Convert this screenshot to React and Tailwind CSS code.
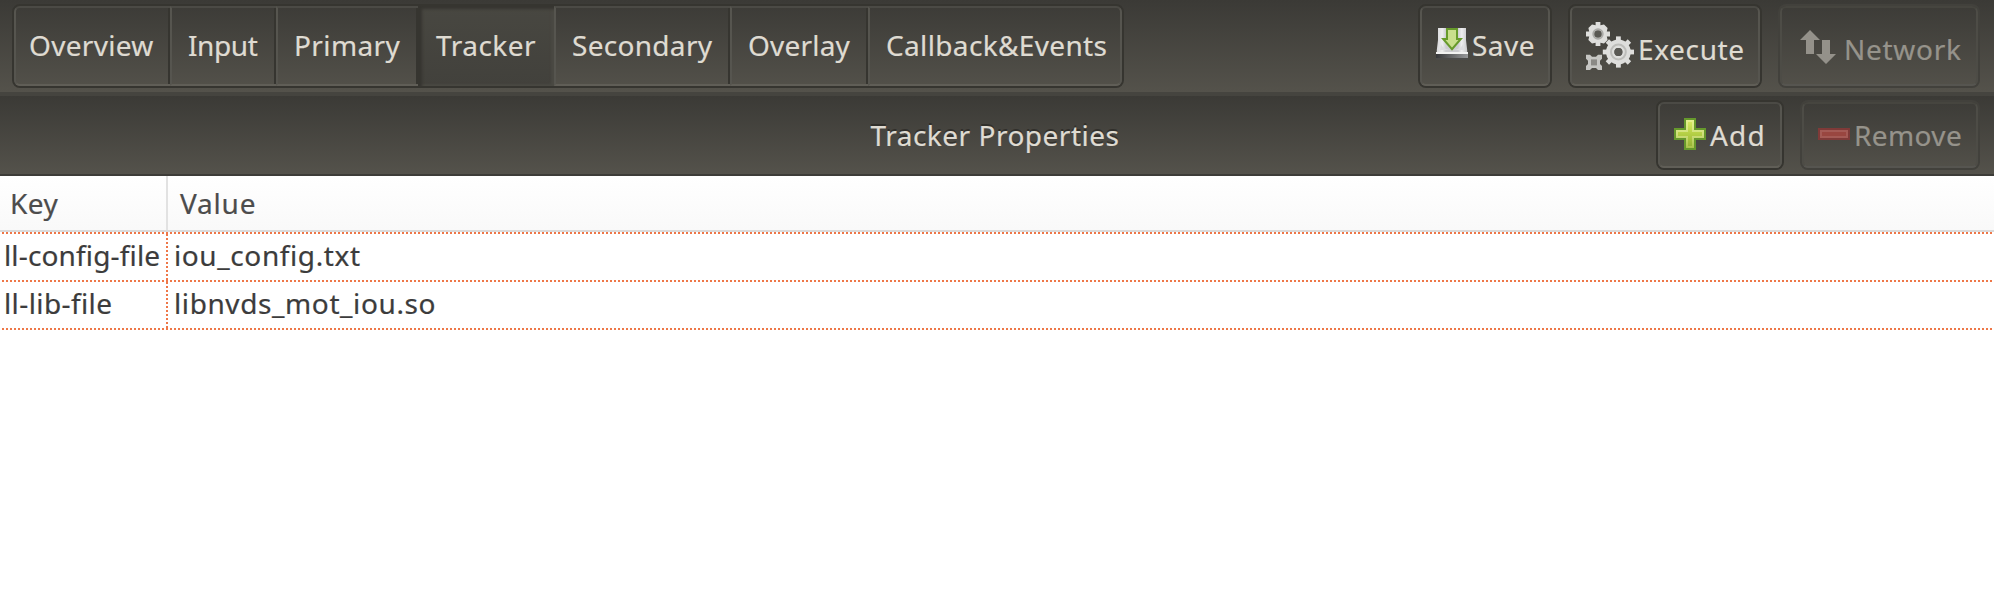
import React from "react";
import clsx from "clsx";

const TABS = [
  { label: "Overview", box: "w-[156px] pl-[13px]", text: "tracking-[0.3px]" },
  { label: "Input", box: "w-[106px] pl-[16px]", text: "tracking-[-0.4px]" },
  { label: "Primary", box: "w-[142px] pl-[16px]", text: "tracking-[0.4px]" },
  { label: "Tracker", box: "w-[136px] pl-[16px]", text: "tracking-[0.5px]", active: true },
  { label: "Secondary", box: "w-[176px] pl-[16px]", text: "tracking-[0.3px]" },
  { label: "Overlay", box: "w-[138px] pl-[16px]", text: "tracking-[0.2px]" },
  { label: "Callback&Events", box: "w-[254px] pl-[16px]", text: "tracking-[0.35px]", last: true },
];

function Tab({ tab }) {
  if (tab.active) {
    return (
      <button
        className={clsx(
          "flex h-full items-start bg-linear-to-b from-[#484741] to-[#42413c] pt-[19px] leading-[40px] shadow-[inset_4px_3px_3px_#363530,inset_-3px_-2px_2px_#4a4943]",
          tab.box
        )}
      >
        <span className={clsx("ml-[2px]", tab.text)}>{tab.label}</span>
      </button>
    );
  }
  return (
    <button
      className={clsx(
        "flex h-full items-start border-t-2 border-b-2 border-l-2 border-t-[#4b4a45] border-b-[#605e57] border-l-[#56554f] pt-[17px] leading-[40px]",
        tab.last ? "rounded-r-[6px] border-r-2 border-r-[#56554f]" : "shadow-[inset_-2px_0_0_#363530]",
        tab.label === "Overview" && "rounded-l-[6px]",
        tab.box
      )}
    >
      <span className={tab.text}>{tab.label}</span>
    </button>
  );
}

function ToolButton({ className, disabled, children }) {
  return (
    <button
      disabled={disabled}
      className={clsx(
        "shrink-0 rounded-[8px] border-2",
        disabled ? "border-[#42413c] text-[#96938b]" : "border-[#363530]",
        className
      )}
    >
      <span
        className={clsx(
          "flex h-full items-start rounded-[6px] border-2",
          disabled
            ? "border-t-[#46453f] border-r-[#4d4c46] border-b-[#565550] border-l-[#4d4c46]"
            : "border-t-[#4b4a45] border-r-[#56554f] border-b-[#605e57] border-l-[#56554f]"
        )}
      >
        {children}
      </span>
    </button>
  );
}

function SaveIcon() {
  return (
    <svg className="mt-[20px] h-8 w-8 shrink-0" viewBox="0 0 16 16">
      <defs>
        <linearGradient id="drive" x1="0" y1="0" x2="1" y2="0">
          <stop offset="0" stopColor="#d8d8da" />
          <stop offset="0.18" stopColor="#eeeeef" />
          <stop offset="0.3" stopColor="#cdcdd1" />
          <stop offset="0.7" stopColor="#cdcdd1" />
          <stop offset="0.82" stopColor="#eeeeef" />
          <stop offset="1" stopColor="#c8c8ca" />
        </linearGradient>
        <linearGradient id="base" x1="0" y1="0" x2="1" y2="0">
          <stop offset="0" stopColor="#36373a" />
          <stop offset="1" stopColor="#97989a" />
        </linearGradient>
      </defs>
      <path d="M1 0H15V6L15.6 11V12H0.4V11L1 6Z" fill="url(#drive)" />
      <path d="M2.5 8C4 12 12 12 13.5 8L14 11H2Z" fill="#dcdcdf" />
      <rect x="0" y="12" width="16" height="1" fill="#f2f2f2" />
      <rect x="0" y="13" width="16" height="2" fill="url(#base)" />
      <rect x="0" y="15" width="16" height="1" fill="#4c4c4e" fillOpacity="0.6" />
      <path d="M5.5 0.5H10.5V5.5H12.4L8 10.6L3.6 5.5H5.5Z" fill="#c9df8c" stroke="#679a2b" />
    </svg>
  );
}

const BIG_TEETH = [0, 45, 90, 135, 180, 225, 270, 315];

function ExecuteIcon() {
  return (
    <svg className="mt-[14px] h-12 w-12 shrink-0" viewBox="0 0 24 24">
      <g fill="#dededc">
        {BIG_TEETH.map((a) => (
          <rect key={a} x="15" y="7.2" width="2.4" height="3" transform={`rotate(${a} 16.2 15)`} />
        ))}
        <path d="M4.8 0H7.2V1.6L9 1.2L10.8 3L10.4 4.8H12V7.2H10.4L10.8 9L9 10.8L7.2 10.4V12H4.8V10.4L3 10.8L1.2 9L1.6 7.2H0V4.8H1.6L1.2 3L3 1.2L4.8 1.6Z" />
      </g>
      <circle cx="16.2" cy="15" r="4.1" fill="none" stroke="#dededc" strokeWidth="4.2" />
      <circle cx="16.2" cy="15" r="3.7" fill="none" stroke="#bdbdba" strokeWidth="1" />
      <circle cx="16.2" cy="15" r="2" fill="#5a5954" />
      <circle cx="6" cy="6" r="2.4" fill="none" stroke="#aaaaa7" strokeWidth="0.9" />
      <circle cx="6" cy="6" r="1.9" fill="#5a5954" />
      <path
        d="M0 16.4H2L3 17.4H5L6 16.4H8V18.4L7 19.4V21L8 22V24H6L5 23H3L2 24H0V22L1 21V19.4L0 18.4Z"
        fill="#c6c6c3"
      />
      <rect x="2.5" y="18.7" width="3" height="3" fill="#8b8a86" />
    </svg>
  );
}

function NetworkIcon() {
  return (
    <svg className="mt-[22px] h-[34px] w-9 shrink-0" viewBox="0 0 18 17" fill="#94918a">
      <path d="M5 0L10 5H7V12H3V5H0Z" />
      <path d="M11 5H15V12H18L13 17L8 12H11Z" />
    </svg>
  );
}

function AddIcon() {
  return (
    <svg className="mt-[14px] h-8 w-8 shrink-0" viewBox="0 0 16 16" shapeRendering="crispEdges">
      <defs>
        <linearGradient id="plus" x1="0" y1="0" x2="0" y2="1">
          <stop offset="0" stopColor="#d6e660" />
          <stop offset="0.5" stopColor="#b4cf45" />
          <stop offset="1" stopColor="#98b436" />
        </linearGradient>
        <linearGradient id="plusEdge" x1="0" y1="0" x2="0" y2="1">
          <stop offset="0" stopColor="#e6f08e" />
          <stop offset="0.5" stopColor="#cfe07c" />
          <stop offset="1" stopColor="#a9c24a" />
        </linearGradient>
      </defs>
      <path d="M5 0H11V5H16V11H11V16H5V11H0V5H5Z" fill="#66982c" />
      <path d="M6 1H10V6H15V10H10V15H6V10H1V6H6Z" fill="url(#plusEdge)" />
      <path d="M7 2H9V7H14V9H9V14H7V9H2V7H7Z" fill="url(#plus)" />
    </svg>
  );
}

function RemoveIcon() {
  return (
    <svg className="mt-[24px] h-3 w-8 shrink-0" viewBox="0 0 16 6" shapeRendering="crispEdges">
      <rect width="16" height="6" fill="#7f3a38" />
      <rect x="1" y="1" width="14" height="4" fill="#a45a55" />
      <rect x="2" y="2" width="12" height="2" fill="#994640" />
    </svg>
  );
}

const H_DOTS =
  "h-[2px] w-full bg-[repeating-linear-gradient(90deg,transparent_0_2px,#ee7748_2px_4px)]";
const V_DOTS =
  "h-full w-[2px] shrink-0 bg-[repeating-linear-gradient(180deg,#ee7748_0_2px,transparent_2px_4px)]";

const ROWS = [
  { k: "ll-config-file", v: "iou_config.txt", kt: "tracking-[0.15px]", vt: "tracking-[0.6px]" },
  { k: "ll-lib-file", v: "libnvds_mot_iou.so", kt: "tracking-[0.4px]", vt: "tracking-[0.6px]" },
];

export default function App() {
  return (
    <div className="flex h-[600px] w-[1994px] flex-col overflow-hidden bg-white font-['Noto_Sans',sans-serif] text-[28px] text-[#3c3c3c] [-webkit-text-stroke:0.2px_currentColor]">
      <header className="flex h-[96px] shrink-0 items-start border-b-4 border-[#45443f] bg-linear-to-b from-[#3b3a36] to-[#54524b] pt-[4px] pr-[14px] pl-[12px] text-[#dfdbd2] [text-shadow:0_-2px_0_rgba(35,34,30,0.6)]">
        <nav className="flex h-[84px] w-[1112px] shrink-0 rounded-[8px] border-2 border-[#363530]">
          {TABS.map((t) => (
            <Tab key={t.label} tab={t} />
          ))}
        </nav>
        <div className="ml-auto flex gap-[16px] leading-[40px]">
          <ToolButton className="h-[84px] w-[134px]">
            <span className="flex pl-[14px]">
              <SaveIcon />
              <span className="mt-[17px] ml-[4px] tracking-[0.5px]">Save</span>
            </span>
          </ToolButton>
          <ToolButton className="h-[84px] w-[194px]">
            <span className="flex pl-[14px]">
              <ExecuteIcon />
              <span className="mt-[21px] ml-[4px] tracking-[0.65px]">Execute</span>
            </span>
          </ToolButton>
          <ToolButton disabled className="h-[84px] w-[202px]">
            <span className="flex pl-[18px]">
              <NetworkIcon />
              <span className="mt-[21px] ml-[8px] tracking-[0.7px]">Network</span>
            </span>
          </ToolButton>
        </div>
      </header>

      <section className="grid h-[80px] shrink-0 grid-cols-[1fr_auto_1fr] items-start border-b-2 border-[#3d3c38] bg-linear-to-b from-[#3b3a36] to-[#54524b] pt-[4px] pr-[14px] leading-[40px] text-[#dfdbd2] [text-shadow:0_-2px_0_rgba(35,34,30,0.6)]">
        <h1 className="col-start-2 mt-[15px] pl-[10px] tracking-[0.5px]">Tracker Properties</h1>
        <div className="flex justify-end gap-[16px]">
          <ToolButton className="h-[70px] w-[128px]">
            <span className="flex pl-[14px]">
              <AddIcon />
              <span className="mt-[11px] ml-[4px] tracking-[1.2px]">Add</span>
            </span>
          </ToolButton>
          <ToolButton disabled className="h-[70px] w-[180px]">
            <span className="flex pl-[14px]">
              <RemoveIcon />
              <span className="mt-[11px] ml-[4px] tracking-[0.4px]">Remove</span>
            </span>
          </ToolButton>
        </div>
      </section>

      <main className="flex flex-col">
        <div className="flex h-[56px] border-b-2 border-[#dadada] bg-linear-to-b from-white to-[#f9f9f9] leading-[54px] text-[#4c4c4c]">
          <div className="w-[168px] border-r-2 border-[#e2e2e2] pl-[10px]">
            <span className="tracking-[0.5px]">Key</span>
          </div>
          <div className="pl-[12px] tracking-[0.8px]">Value</div>
        </div>
        <div className={H_DOTS} />
        {ROWS.map((r) => (
          <div key={r.k} className="flex h-[48px] flex-col">
            <div className="flex h-[46px] leading-[42px]">
              <div className="w-[166px] shrink-0 pl-[4px] whitespace-nowrap">
                <span className={r.kt}>{r.k}</span>
              </div>
              <div className={V_DOTS} />
              <div className={clsx("pl-[6px] whitespace-nowrap", r.vt)}>{r.v}</div>
            </div>
            <div className={H_DOTS} />
          </div>
        ))}
      </main>
    </div>
  );
}
